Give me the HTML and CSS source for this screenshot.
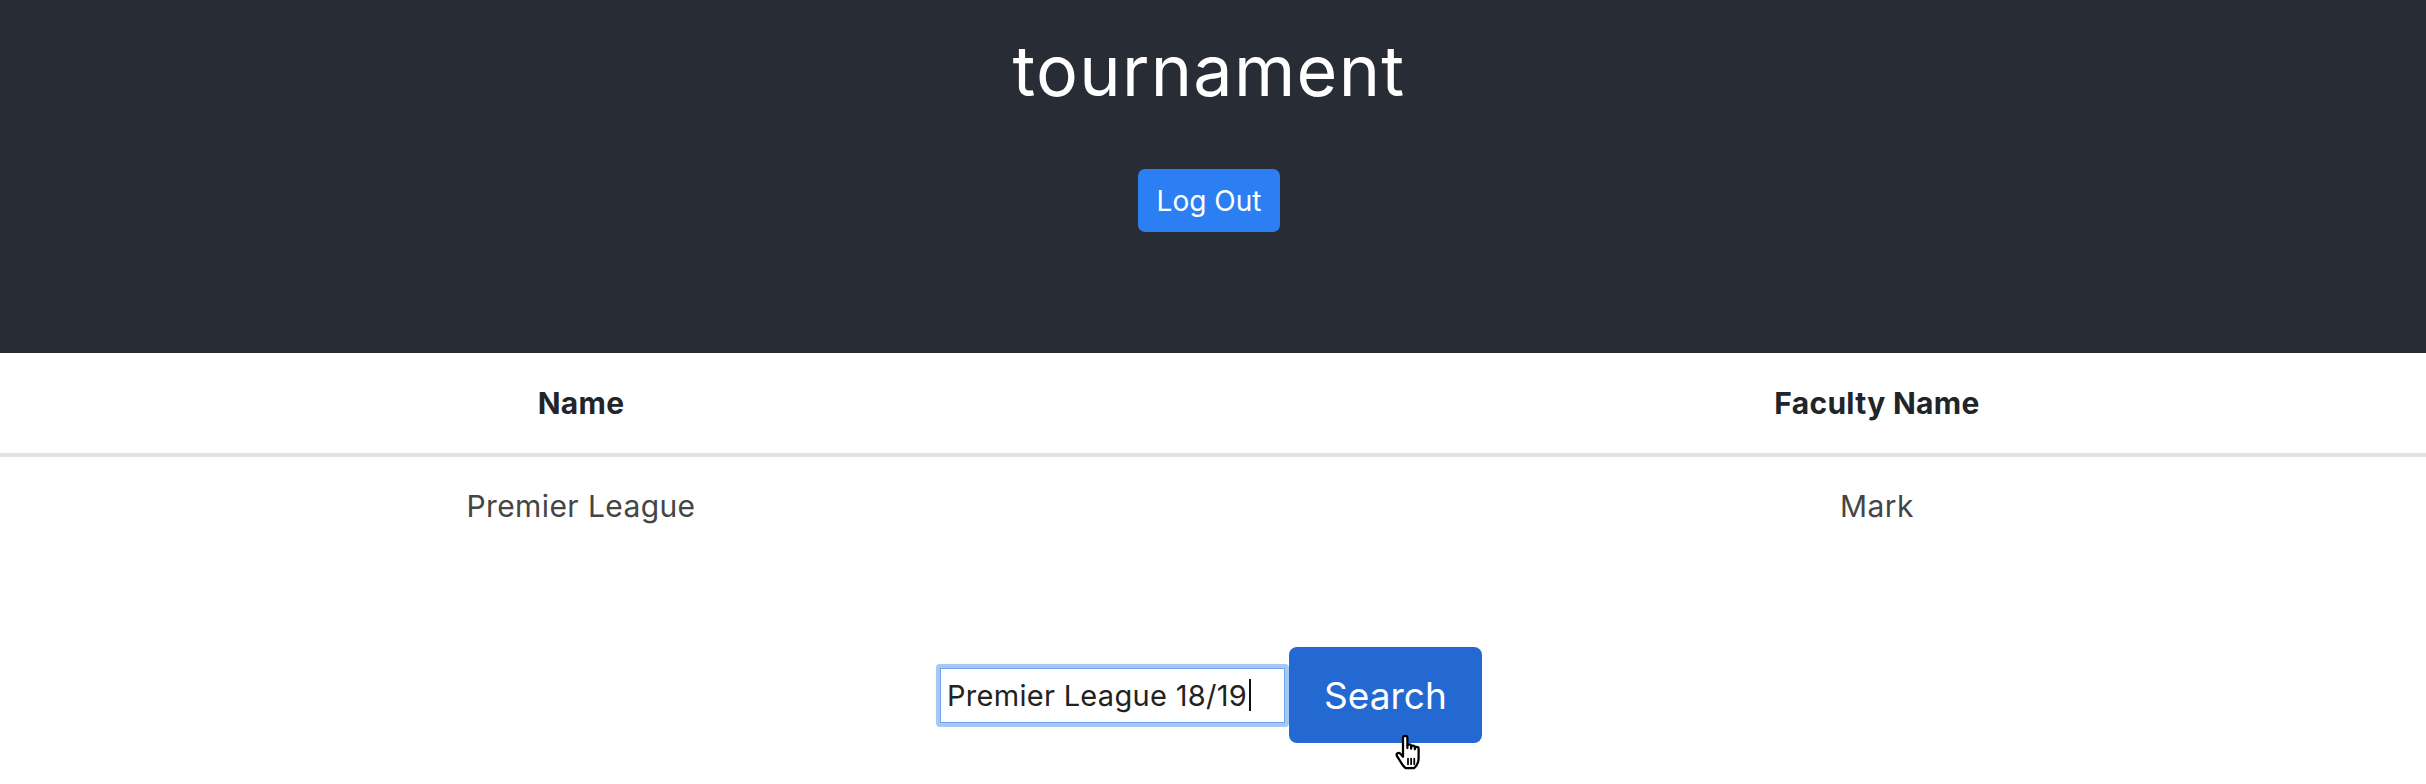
FILE: index.html
```html
<!DOCTYPE html>
<html lang="en">
<head>
<meta charset="utf-8">
<title>tournament</title>
<link rel="stylesheet" href="styles.css">
</head>
<body>
<header class="app-header">
  <h1 class="app-title">tournament</h1>
  <button class="btn btn-logout" type="button">Log Out</button>
</header>
<main class="content">
  <div class="table">
    <div class="row row-head">
      <div class="cell cell-head">Name</div>
      <div class="cell cell-head">Faculty Name</div>
    </div>
    <div class="row row-body">
      <div class="cell">Premier League</div>
      <div class="cell">Mark</div>
    </div>
  </div>
  <form class="search-form">
    <div class="search-wrap">
      <div class="search-input" role="textbox" aria-label="Tournament name">Premier League 18/19<span class="caret"></span></div>
    </div>
    <div class="search-btn-wrap">
      <button class="btn btn-search" type="button">Search</button>
      <svg class="cursor-hand" viewBox="0 0 24 30" aria-hidden="true">
        <path d="M8 16 L8 3 Q8 1.2 9.75 1.2 Q11.5 1.2 11.5 3 L11.5 11 L11.5 9.5 Q11.5 8 13 8 Q14.5 8 14.5 9.5 L14.5 11.5 L14.5 10.5 Q14.5 9 16 9 Q17.5 9 17.5 10.5 L17.5 12 L17.5 11.5 Q17.5 10 19 10 Q20.5 10 20.5 11.5 L20.5 19 Q20.5 24 17 27 L10 27 Q8.5 26 7 23.5 L3.2 17.5 Q2.4 16 3.6 15.2 Q4.8 14.5 5.8 15.5 L8 18 Z" fill="#ffffff" stroke="#000000" stroke-width="1.8" stroke-linejoin="round"/>
        <path d="M12 19.5 V24 M14.5 19.5 V24 M17 19.5 V24" stroke="#000000" stroke-width="1.4" stroke-linecap="round" fill="none"/>
      </svg>
    </div>
  </form>
</main>
</body>
</html>
```

FILE: styles.css
```css
html, body {
  margin: 0;
  padding: 0;
  background: #ffffff;
}

body {
  min-height: 100vh;
  font-family: Inter, "Liberation Sans", Arial, sans-serif;
  color: #212529;
}

.app-header {
  background: #282c34;
  height: 353px;
  box-sizing: border-box;
  padding-top: 26px;
  padding-right: 8px;
  display: flex;
  flex-direction: column;
  align-items: center;
}

.app-title {
  margin: 0;
  font-size: 70px;
  font-weight: 400;
  line-height: 90px;
  color: #ffffff;
  letter-spacing: 1.3px;
}

.btn {
  font-family: Inter, "Liberation Sans", Arial, sans-serif;
  border: none;
  color: #ffffff;
  cursor: pointer;
  padding: 0;
}

.btn-logout {
  margin-top: 53px;
  width: 142px;
  height: 63px;
  border-radius: 7px;
  background: #2c7ff2;
  font-size: 28px;
}

.content {
  padding-bottom: 40px;
}

.table {
  display: flex;
  flex-direction: column;
}

.row {
  display: grid;
  grid-template-columns: 1162fr 1098fr;
  column-gap: 166px;
  align-items: center;
  text-align: center;
}

.row-head {
  height: 100px;
  border-bottom: 4px solid #dfe2e6;
}

.row-body {
  height: 98px;
}

.cell {
  font-size: 30px;
  color: #454545;
  font-weight: 400;
  letter-spacing: 0.4px;
}

.cell-head {
  font-weight: 700;
  color: #212529;
  font-size: 30px;
  letter-spacing: 0.3px;
}

.search-form {
  display: flex;
  justify-content: center;
  align-items: center;
  margin: 92px 0 0;
  padding-right: 8px;
}

.search-wrap {
  width: 353px;
  height: 63px;
  box-sizing: border-box;
  border: 4px solid #a6c8f5;
  border-radius: 4px;
  display: flex;
}

.search-input {
  flex: 1;
  min-width: 0;
  box-sizing: border-box;
  display: flex;
  align-items: center;
  border: 1.5px solid #6fa5ec;
  padding: 0 0 0 6px;
  font-family: Inter, "Liberation Sans", Arial, sans-serif;
  font-size: 29px;
  letter-spacing: 0.3px;
  white-space: nowrap;
  color: #222222;
  background: #ffffff;
  overflow: hidden;
}

.caret {
  display: inline-block;
  width: 2px;
  height: 32px;
  margin-left: 2px;
  background: #111111;
}

.search-btn-wrap {
  position: relative;
  display: flex;
  flex-direction: column;
}

.btn-search {
  width: 193px;
  height: 96px;
  border-radius: 8px;
  background: #2468d2;
  font-size: 37px;
}

.cursor-hand {
  position: absolute;
  z-index: 2;
  left: 104px;
  top: 87px;
  width: 30px;
  height: 38px;
  overflow: visible;
}
```
